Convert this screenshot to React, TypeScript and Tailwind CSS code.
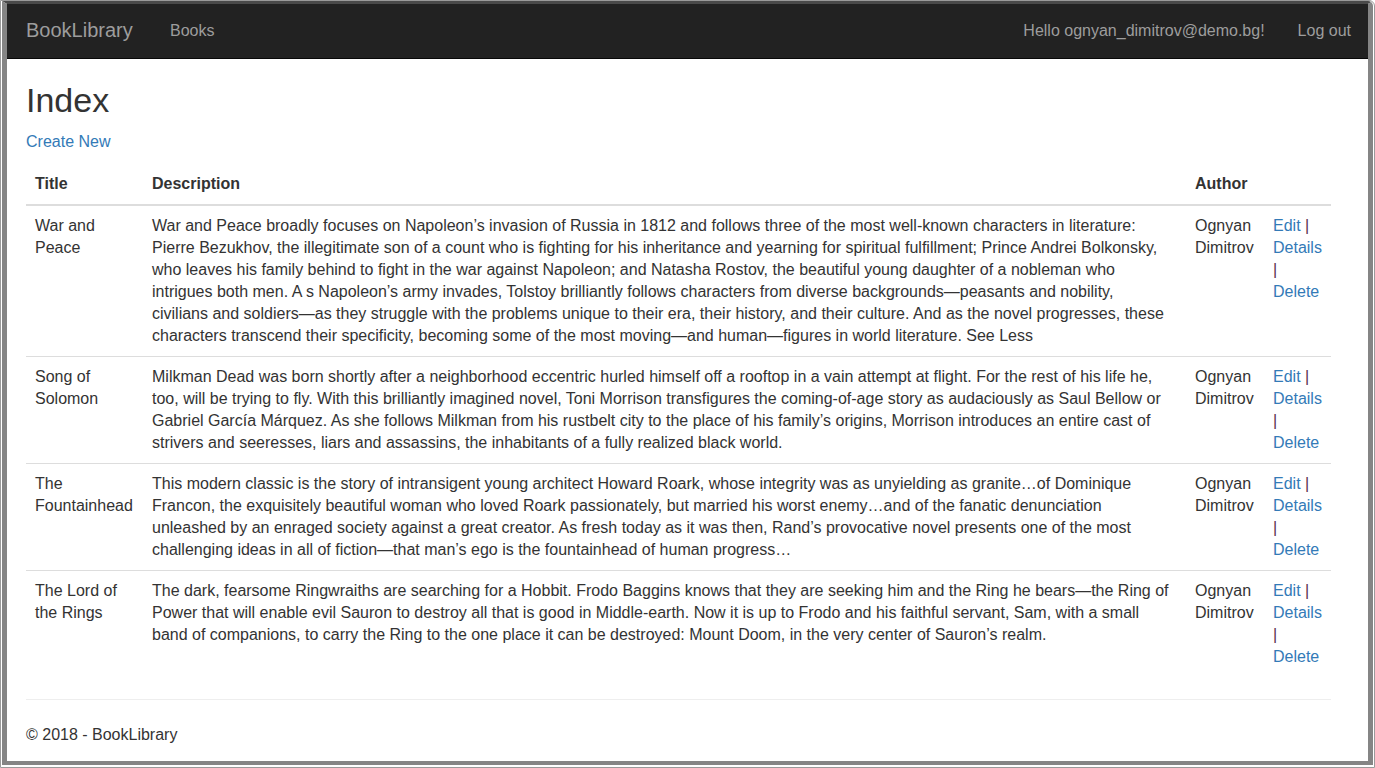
import React from 'react'

type Book = { title: string; description: string; author: string }

const BOOKS: Book[] = [
  {
    title: 'War and Peace',
    description:
      'War and Peace broadly focuses on Napoleon’s invasion of Russia in 1812 and follows three of the most well-known characters in literature: Pierre Bezukhov, the illegitimate son of a count who is fighting for his inheritance and yearning for spiritual fulfillment; Prince Andrei Bolkonsky, who leaves his family behind to fight in the war against Napoleon; and Natasha Rostov, the beautiful young daughter of a nobleman who intrigues both men. A s Napoleon’s army invades, Tolstoy brilliantly follows characters from diverse backgrounds—peasants and nobility, civilians and soldiers—as they struggle with the problems unique to their era, their history, and their culture. And as the novel progresses, these characters transcend their specificity, becoming some of the most moving—and human—figures in world literature. See Less',
    author: 'Ognyan Dimitrov',
  },
  {
    title: 'Song of Solomon',
    description:
      'Milkman Dead was born shortly after a neighborhood eccentric hurled himself off a rooftop in a vain attempt at flight. For the rest of his life he, too, will be trying to fly. With this brilliantly imagined novel, Toni Morrison transfigures the coming-of-age story as audaciously as Saul Bellow or Gabriel García Márquez. As she follows Milkman from his rustbelt city to the place of his family’s origins, Morrison introduces an entire cast of strivers and seeresses, liars and assassins, the inhabitants of a fully realized black world.',
    author: 'Ognyan Dimitrov',
  },
  {
    title: 'The Fountainhead',
    description:
      'This modern classic is the story of intransigent young architect Howard Roark, whose integrity was as unyielding as granite…of Dominique Francon, the exquisitely beautiful woman who loved Roark passionately, but married his worst enemy…and of the fanatic denunciation unleashed by an enraged society against a great creator. As fresh today as it was then, Rand’s provocative novel presents one of the most challenging ideas in all of fiction—that man’s ego is the fountainhead of human progress…',
    author: 'Ognyan Dimitrov',
  },
  {
    title: 'The Lord of the Rings',
    description:
      'The dark, fearsome Ringwraiths are searching for a Hobbit. Frodo Baggins knows that they are seeking him and the Ring he bears—the Ring of Power that will enable evil Sauron to destroy all that is good in Middle-earth. Now it is up to Frodo and his faithful servant, Sam, with a small band of companions, to carry the Ring to the one place it can be destroyed: Mount Doom, in the very center of Sauron’s realm.',
    author: 'Ognyan Dimitrov',
  },
]

function Navbar() {
  return (
    <div className="flex h-[55px] shrink-0 items-center border-b border-[#080808] bg-[#222222] text-[#9d9d9d]">
      <div className="ml-[19px] w-[144px] text-[20px] leading-[22px] -mt-[2px]">BookLibrary</div>
      <a className="text-[16px] leading-[22px]">Books</a>
      <div className="ml-auto mr-[17px] flex items-center gap-[33px] text-[16px] leading-[22px]">
        <a>Hello ognyan_dimitrov@demo.bg!</a>
        <a>Log out</a>
      </div>
    </div>
  )
}

function BookTable() {
  return (
    <table className="w-[1305px] table-fixed border-collapse text-left">
      <colgroup>
        <col className="w-[117px]" />
        <col className="w-[1043px]" />
        <col className="w-[78px]" />
        <col className="w-[67px]" />
      </colgroup>
      <thead>
        <tr>
          <th className="border-b-2 border-[#dddddd] px-[9px] py-[9px] font-bold">Title</th>
          <th className="border-b-2 border-[#dddddd] px-[9px] py-[9px] font-bold">Description</th>
          <th className="border-b-2 border-[#dddddd] px-[9px] py-[9px] font-bold">Author</th>
          <th className="border-b-2 border-[#dddddd] px-[9px] py-[9px]"></th>
        </tr>
      </thead>
      <tbody>
        {BOOKS.map((b, i) => (
          <tr key={b.title} className={i > 0 ? 'border-t border-[#dddddd]' : ''}>
            <td className="px-[9px] py-[9px] align-top">{b.title}</td>
            <td className="py-[9px] pl-[9px] pr-[14px] align-top">{b.description}</td>
            <td className="px-[9px] py-[9px] align-top">{b.author}</td>
            <td className="py-[9px] pl-[9px] pr-[6px] align-top">
              <a className="text-[#337ab7]">Edit</a> <span className="text-[#5a2a4c]">|</span>{' '}
              <a className="text-[#337ab7]">Details</a> <span className="text-[#5a2a4c]">|</span>{' '}
              <a className="text-[#337ab7]">Delete</a>
            </td>
          </tr>
        ))}
      </tbody>
    </table>
  )
}

export default function App() {
  return (
    <div className="h-[768px] w-[1375px] overflow-hidden rounded-tr-[6px] border border-[#9a9a9a] bg-white px-px pb-[2px] font-['Liberation_Sans',Arial,sans-serif] text-[16px] leading-[22px] text-[#333333]">
      <div className="flex h-full flex-col rounded-tr-[5px] border-x-[5px] border-b-[4px] border-t-[3px] border-x-[#858585] border-b-[#858585] border-t-[#4a4a4a] bg-white">
        <Navbar />
        <div className="pl-[19px]">
          <h2 className="mt-[23px] text-[34px] font-normal leading-[37px]">Index</h2>
          <p className="mt-[12px] mb-[11px]">
            <a className="text-[#337ab7]">Create New</a>
          </p>
          <BookTable />
          <hr className="mt-[22px] w-[1305px] border-t border-[#eeeeee]" />
          <footer className="mt-[24px]">
            <p>© 2018 - BookLibrary</p>
          </footer>
        </div>
      </div>
    </div>
  )
}
